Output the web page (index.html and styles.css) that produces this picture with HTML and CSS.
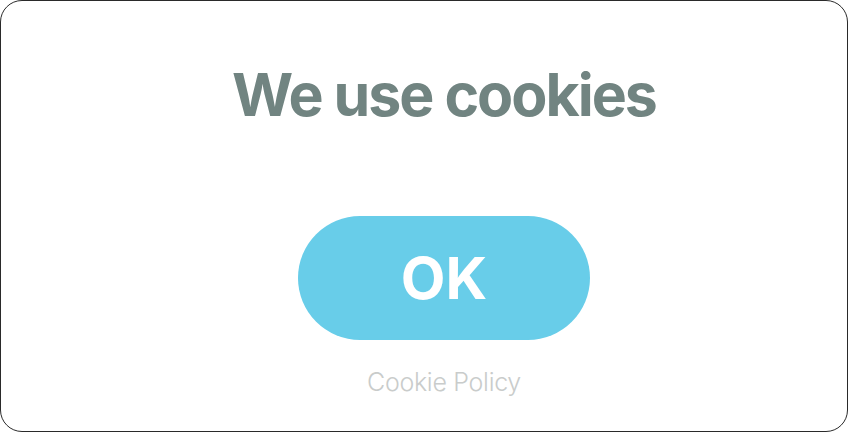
FILE: index.html
```html
<!DOCTYPE html>
<html>
<head>
<meta charset="utf-8">
<link rel="stylesheet" href="styles.css">
</head>
<body>
<div class="card">
  <h1 class="title">We use cookies</h1>
  <button class="ok">OK</button>
  <a class="policy">Cookie Policy</a>
</div>
</body>
</html>
```
FILE: styles.css
```css
html, body { margin: 0; padding: 0; background: #fff; }
.card {
  box-sizing: border-box;
  width: 848px;
  height: 432px;
  border: 1.5px solid #2a2a2a;
  border-radius: 22px;
  padding-left: 40px;
  display: flex;
  flex-direction: column;
  align-items: center;
  font-family: Inter, "Noto Sans", sans-serif;
}
.title {
  margin: 58px 0 0 0;
  font-size: 59px;
  font-weight: 700;
  color: #718481;
  letter-spacing: -2px;
  line-height: 72px;
}
.ok {
  margin-top: 85px;
  width: 292px;
  height: 124px;
  border: none;
  border-radius: 62px;
  background: #68cde9;
  color: #fff;
  font-family: Inter, "Noto Sans", sans-serif;
  font-size: 58px;
  font-weight: 700;
  letter-spacing: 0;
  padding: 0;
}
.policy {
  margin-top: 27px;
  font-size: 25px;
  font-weight: 300;
  color: #c9cccb;
  letter-spacing: -0.3px;
}
```
